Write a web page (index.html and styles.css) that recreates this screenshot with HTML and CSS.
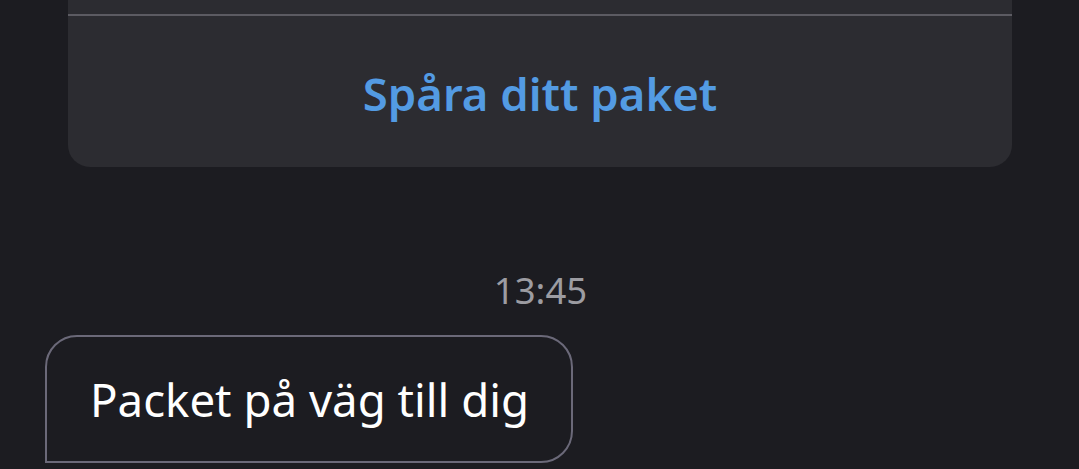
FILE: index.html
```html
<!DOCTYPE html>
<html lang="sv">
<head>
    <meta charset="UTF-8">
    <meta name="viewport" content="width=device-width, initial-scale=1.0">
    <title>Meddelanden</title>
    <link rel="stylesheet" href="styles.css">
</head>
<body>
    <div class="card">
        <div class="card-top"></div>
        <div class="card-action">Spåra ditt paket</div>
    </div>

    <div class="timestamp">13:45</div>

    <div class="thread">
        <div class="bubble">Packet på väg till dig</div>
    </div>
</body>
</html>
```

FILE: styles.css
```css
body {
    margin: 0;
    background: #1c1c21;
    font-family: "Noto Sans", "Open Sans", sans-serif;
    color: #fff;
}
.card {
    margin: 0 67px 0 68px;
    background: #2c2c31;
    border-radius: 0 0 22px 22px;
}
.card-top {
    height: 14px;
    border-bottom: 2px solid #5c5b62;
}
.card-action {
    height: 151px;
    display: flex;
    align-items: center;
    justify-content: center;
    color: #539be3;
    font-size: 45.5px;
    font-weight: 600;
    padding-top: 2px;
    box-sizing: border-box;
}
.timestamp {
    margin-top: 100px;
    text-align: center;
    color: #9c9ca2;
    font-size: 36.5px;
    line-height: 46px;
    padding-left: 2px;
}
.thread {
    margin-top: 22px;
    padding-left: 45px;
}
.bubble {
    display: inline-block;
    padding: 0 42px 0 43px;
    height: 124px;
    line-height: 124px;
    border: 2px solid #6b6979;
    border-radius: 32px 32px 32px 0;
    font-size: 45.6px;
}
```
